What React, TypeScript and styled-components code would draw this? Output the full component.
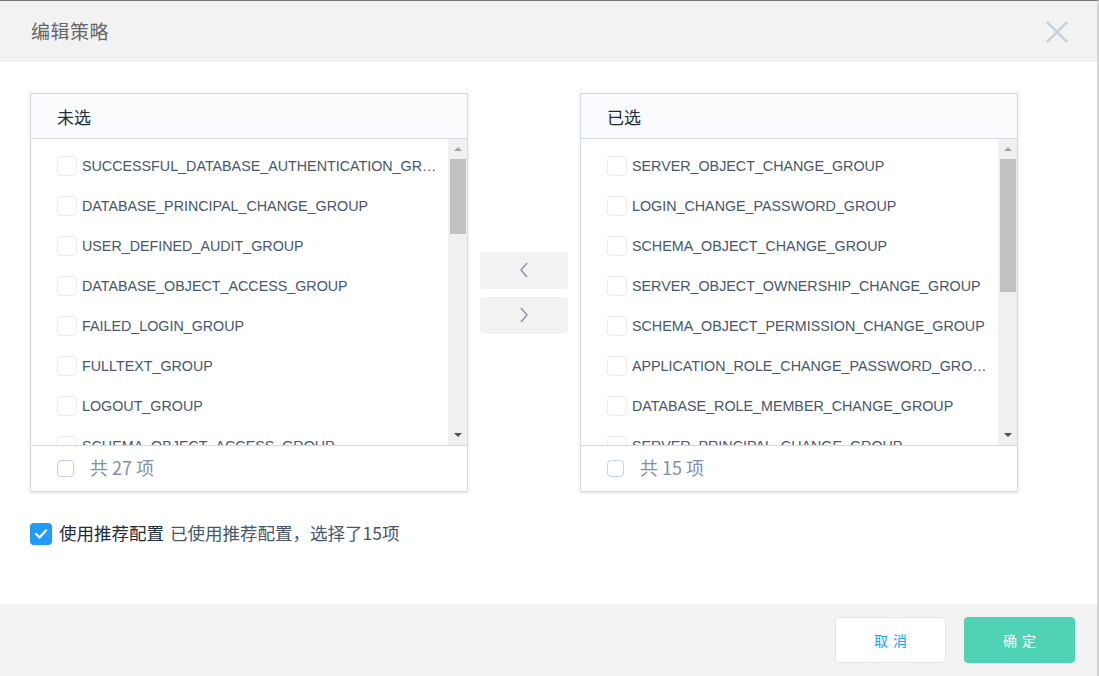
import React from "react";
import styled, { createGlobalStyle } from "styled-components";

const Global = createGlobalStyle`
  html, body { margin: 0; padding: 0; background: #fff; }
  body { font-family: "Liberation Sans", "Noto Sans CJK SC", sans-serif; }
  * { box-sizing: border-box; }
`;

const Dialog = styled.div`
  width: 1099px;
  height: 676px;
  display: flex;
  flex-direction: column;
  border-top: 1px solid #7a7a7a;
  border-right: 2px solid #d4d4d4;
  background: #fff;
  overflow: hidden;
`;

const Header = styled.div`
  height: 61px;
  background: #f2f2f2;
  display: flex;
  align-items: center;
  justify-content: space-between;
  padding: 0 29px 0 31px;
`;

const Title = styled.div`
  font-family: "Noto Sans CJK SC", sans-serif;
  font-size: 19px;
  color: #666;
  letter-spacing: 0.5px;
  margin-top: -2px;
`;

const Body = styled.div`
  flex: 1;
  padding: 31px 30px 0 30px;
  display: flex;
  flex-direction: column;
`;

const Transfer = styled.div`
  display: flex;
  align-items: center;
`;

const Panel = styled.div`
  width: 438px;
  height: 399px;
  border: 1px solid #d1dbe5;
  box-shadow: 0 1px 3px rgba(0, 0, 0, 0.1);
  background: #fff;
  display: flex;
  flex-direction: column;
`;

const PanelHead = styled.div`
  height: 45px;
  flex: none;
  background: #fafbfd;
  border-bottom: 1px solid #d1dbe5;
  display: flex;
  align-items: center;
  padding-left: 26px;
  font-family: "Noto Sans CJK SC", sans-serif;
  font-size: 17px;
  color: #1f2d3d;
`;

const PanelBody = styled.div`
  height: 307px;
  flex: none;
  display: flex;
  border-bottom: 1px solid #d1dbe5;
`;

const List = styled.div`
  flex: 1;
  min-width: 0;
  overflow: hidden;
  padding-top: 7px;
`;

const Item = styled.div`
  height: 40px;
  display: flex;
  align-items: center;
  padding: 0 8px 0 26px;
  gap: 5px;
  font-size: 14.3px;
  color: #48576a;
`;

const Box = styled.span`
  flex: none;
  width: 20px;
  height: 20px;
  border: 1px solid #ececec;
  border-radius: 4px;
  background: #fff;
`;

const ItemText = styled.span`
  white-space: nowrap;
  overflow: hidden;
  text-overflow: ellipsis;
`;

const Scrollbar = styled.div`
  width: 19px;
  flex: none;
  background: #f0f0f0;
  display: flex;
  flex-direction: column;
  align-items: center;
  padding: 0 1px 0 2px;
`;

const Arrow = styled.div<{ $down?: boolean }>`
  height: 20px;
  width: 100%;
  display: flex;
  align-items: center;
  justify-content: center;
  &::after {
    content: "";
    width: 0;
    height: 0;
    border-left: 4px solid transparent;
    border-right: 4px solid transparent;
    ${(p) => (p.$down ? "border-top: 4px solid #505050;" : "border-bottom: 4px solid #a3a3a3;")}
  }
`;

const Thumb = styled.div<{ $h: number }>`
  width: 100%;
  height: ${(p) => p.$h}px;
  background: #c1c1c1;
`;

const Spacer = styled.div`
  flex: 1;
`;

const PanelFoot = styled.div`
  flex: 1;
  display: flex;
  align-items: center;
  padding-left: 26px;
  padding-bottom: 3px;
  gap: 16px;
`;

const FootBox = styled.span`
  width: 17px;
  height: 17px;
  border: 1px solid #c8d1dc;
  border-radius: 4px;
  background: #fff;
  margin-top: 2px;
`;

const FootText = styled.span`
  font-family: "Noto Sans CJK SC", sans-serif;
  font-size: 18px;
  color: #8391a5;
`;

const Buttons = styled.div`
  width: 112px;
  display: flex;
  flex-direction: column;
  align-items: center;
  gap: 8px;
`;

const MoveBtn = styled.div`
  width: 88px;
  height: 37px;
  background: #f2f2f2;
  border-radius: 4px;
  display: flex;
  align-items: center;
  justify-content: center;
`;

const RecommendRow = styled.div`
  margin-top: 28px;
  display: flex;
  align-items: center;
  gap: 7px;
  font-family: "Noto Sans CJK SC", sans-serif;
  font-size: 17.5px;
`;

const CheckedBox = styled.span`
  width: 22px;
  height: 22px;
  border-radius: 4px;
  background: #1f9cfa;
  display: flex;
  align-items: center;
  justify-content: center;
  margin-top: 2px;
`;

const Strong = styled.span`
  color: #1f2d3d;
`;

const Note = styled.span`
  color: #48576a;
  margin-left: -1px;
`;

const Footer = styled.div`
  height: 72px;
  background: #f2f2f2;
  display: flex;
  align-items: center;
  justify-content: flex-end;
  gap: 18px;
  padding-right: 22px;
`;

const Btn = styled.div<{ $primary?: boolean }>`
  width: 111px;
  height: 46px;
  border-radius: 4px;
  display: flex;
  align-items: center;
  justify-content: center;
  font-family: "Noto Sans CJK SC", sans-serif;
  font-size: 14px;
  letter-spacing: 5px;
  padding-left: 5px;
  background: ${(p) => (p.$primary ? "#50d2b5" : "#fff")};
  color: ${(p) => (p.$primary ? "#fff" : "#20a0ff")};
  border: 1px solid ${(p) => (p.$primary ? "#50d2b5" : "#e4e4e4")};
`;

const left = [
  "SUCCESSFUL_DATABASE_AUTHENTICATION_GROUP",
  "DATABASE_PRINCIPAL_CHANGE_GROUP",
  "USER_DEFINED_AUDIT_GROUP",
  "DATABASE_OBJECT_ACCESS_GROUP",
  "FAILED_LOGIN_GROUP",
  "FULLTEXT_GROUP",
  "LOGOUT_GROUP",
  "SCHEMA_OBJECT_ACCESS_GROUP",
];

const right = [
  "SERVER_OBJECT_CHANGE_GROUP",
  "LOGIN_CHANGE_PASSWORD_GROUP",
  "SCHEMA_OBJECT_CHANGE_GROUP",
  "SERVER_OBJECT_OWNERSHIP_CHANGE_GROUP",
  "SCHEMA_OBJECT_PERMISSION_CHANGE_GROUP",
  "APPLICATION_ROLE_CHANGE_PASSWORD_GROUP",
  "DATABASE_ROLE_MEMBER_CHANGE_GROUP",
  "SERVER_PRINCIPAL_CHANGE_GROUP",
];

function TransferPanel({ title, items, count, thumb }: { title: string; items: string[]; count: number; thumb: number }) {
  return (
    <Panel>
      <PanelHead>{title}</PanelHead>
      <PanelBody>
        <List>
          {items.map((t) => (
            <Item key={t}>
              <Box />
              <ItemText>{t}</ItemText>
            </Item>
          ))}
        </List>
        <Scrollbar>
          <Arrow />
          <Thumb $h={thumb} />
          <Spacer />
          <Arrow $down />
        </Scrollbar>
      </PanelBody>
      <PanelFoot>
        <FootBox />
        <FootText>共 {count} 项</FootText>
      </PanelFoot>
    </Panel>
  );
}

export default function App() {
  return (
    <>
      <Global />
      <Dialog>
        <Header>
          <Title>编辑策略</Title>
          <svg width="22" height="22" viewBox="0 0 22 22">
            <path d="M1 1 L21 21 M21 1 L1 21" stroke="#c3cedb" strokeWidth="2.2" fill="none" />
          </svg>
        </Header>
        <Body>
          <Transfer>
            <TransferPanel title="未选" items={left} count={27} thumb={75} />
            <Buttons>
              <MoveBtn>
                <svg width="10" height="16" viewBox="0 0 10 16">
                  <path d="M8 1 L2 8 L8 15" stroke="#8a97a8" strokeWidth="1.5" fill="none" />
                </svg>
              </MoveBtn>
              <MoveBtn>
                <svg width="10" height="16" viewBox="0 0 10 16">
                  <path d="M2 1 L8 8 L2 15" stroke="#8a97a8" strokeWidth="1.5" fill="none" />
                </svg>
              </MoveBtn>
            </Buttons>
            <TransferPanel title="已选" items={right} count={15} thumb={133} />
          </Transfer>
          <RecommendRow>
            <CheckedBox>
              <svg width="14" height="12" viewBox="0 0 14 12">
                <path d="M2 6 L5.5 9.5 L12 2.5" stroke="#fff" strokeWidth="2.4" fill="none" strokeLinecap="round" strokeLinejoin="round" />
              </svg>
            </CheckedBox>
            <Strong>使用推荐配置</Strong>
            <Note>已使用推荐配置，选择了15项</Note>
          </RecommendRow>
        </Body>
        <Footer>
          <Btn>取消</Btn>
          <Btn $primary>确定</Btn>
        </Footer>
      </Dialog>
    </>
  );
}
